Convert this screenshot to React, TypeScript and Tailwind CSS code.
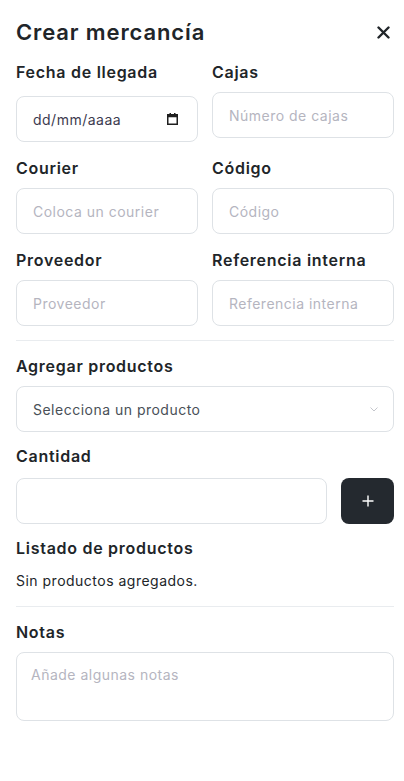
import React from "react";

const font = { fontFamily: "Inter, 'Noto Sans', sans-serif" };

function Label({ children, className = "" }: { children: React.ReactNode; className?: string }) {
  return (
    <div className={`h-6 text-[16px] leading-6 font-semibold text-[#212529] tracking-[0.045em] whitespace-nowrap ${className}`}>
      {children}
    </div>
  );
}

function TextInput({ placeholder }: { placeholder: string }) {
  return (
    <input
      placeholder={placeholder}
      className="mt-2 h-[46px] w-full rounded-lg border border-[#dee2e6] bg-white px-4 text-[14px] tracking-[0.035em] text-[#212529] placeholder:text-[#b5b5bf] outline-none"
    />
  );
}

export default function App() {
  return (
    <div className="min-h-[781px] w-[404px] bg-white pl-4 pr-[10px]" style={font}>
      <div className="flex h-7 items-center justify-between pt-0 mt-[18px]">
        <h1 className="text-[22px] leading-7 font-semibold text-[#212529] tracking-[0.04em]">Crear mercancía</h1>
        <button className="mr-[3px] flex h-4 w-4 items-center justify-center text-[#212529]">
          <svg width="13" height="13" viewBox="0 0 13 13">
            <path d="M1.5 1.5 L11.5 11.5 M11.5 1.5 L1.5 11.5" stroke="currentColor" strokeWidth="2.4" strokeLinecap="round" />
          </svg>
        </button>
      </div>

      <div className="mt-[14px] grid grid-cols-2 items-start gap-x-[14px] gap-y-[14px]">
        <div>
          <Label>Fecha de llegada</Label>
          <div className="mt-3 flex h-[46px] w-full items-center justify-between rounded-lg border border-[#dee2e6] bg-white pl-4 pr-[19px] text-[14px] tracking-[0.035em] text-[#3d3b4f]">
            <span>dd/mm/aaaa</span>
            <svg width="11" height="12" viewBox="0 0 11 12">
              <rect x="0.75" y="1.75" width="9.5" height="9.5" fill="none" stroke="#1f1f1f" strokeWidth="1.5" />
              <rect x="0.75" y="1.75" width="9.5" height="2.5" fill="#1f1f1f" />
              <rect x="2.5" y="0" width="1.5" height="2" fill="#1f1f1f" />
              <rect x="7" y="0" width="1.5" height="2" fill="#1f1f1f" />
            </svg>
          </div>
        </div>
        <div>
          <Label>Cajas</Label>
          <TextInput placeholder="Número de cajas" />
        </div>
        <div>
          <Label>Courier</Label>
          <TextInput placeholder="Coloca un courier" />
        </div>
        <div>
          <Label>Código</Label>
          <TextInput placeholder="Código" />
        </div>
        <div>
          <Label>Proveedor</Label>
          <TextInput placeholder="Proveedor" />
        </div>
        <div>
          <Label>Referencia interna</Label>
          <TextInput placeholder="Referencia interna" />
        </div>
      </div>

      <div className="mt-[14px] h-px bg-[#e9ecef]" />

      <Label className="mt-[13px]">Agregar productos</Label>
      <div className="mt-2 flex h-[46px] w-full items-center justify-between rounded-lg border border-[#dee2e6] bg-white pl-4 pr-[15px] text-[14px] tracking-[0.035em] text-[#495057]">
        <span>Selecciona un producto</span>
        <svg width="8" height="5" viewBox="0 0 8 5">
          <path d="M0.5 0.5 L4 4 L7.5 0.5" fill="none" stroke="#c4c6cc" strokeWidth="1" />
        </svg>
      </div>

      <Label className="mt-3">Cantidad</Label>
      <div className="mt-[10px] flex gap-[14px]">
        <input className="h-[46px] flex-1 rounded-lg border border-[#dee2e6] bg-white px-4 text-[14px] outline-none" />
        <button className="flex h-[46px] w-[53px] items-center justify-center rounded-lg bg-[#24292f] text-white">
          <svg width="12" height="12" viewBox="0 0 12 12">
            <path d="M6 0.5 V11.5 M0.5 6 H11.5" stroke="white" strokeWidth="1.4" />
          </svg>
        </button>
      </div>

      <Label className="mt-3">Listado de productos</Label>
      <p className="mt-[11px] h-5 text-[14px] leading-5 tracking-[0.035em] text-[#212529]">Sin productos agregados.</p>

      <div className="mt-[15px] h-px bg-[#e9ecef]" />

      <Label className="mt-[13px]">Notas</Label>
      <textarea
        placeholder="Añade algunas notas"
        className="mt-2 block h-[69px] w-full resize-none rounded-lg border border-[#dee2e6] bg-white px-[14px] pt-3 text-[14px] leading-5 tracking-[0.035em] text-[#212529] placeholder:text-[#b5b5bf] outline-none"
      />
    </div>
  );
}
